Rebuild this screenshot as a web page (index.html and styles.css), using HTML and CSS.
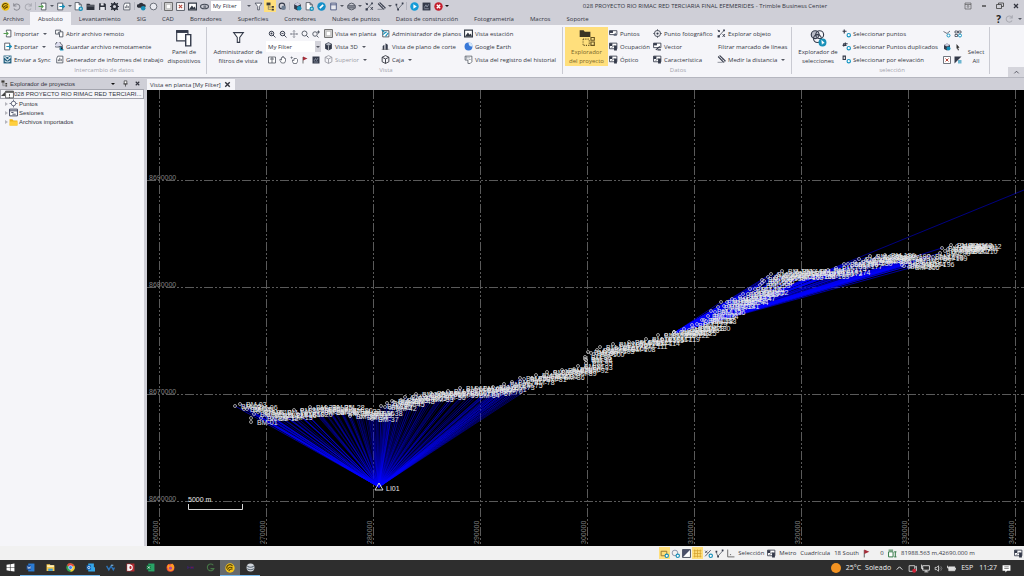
FILE: index.html
```
<!DOCTYPE html>
<html lang="es">
<head>
	<meta charset="utf-8">
	<title>Trimble Business Center</title>
	<link rel="stylesheet" href="styles.css">
</head>
<body>
	<svg class="sprite" aria-hidden="true">
		<symbol id="logo" viewBox="0 0 16 16"><circle cx="8" cy="8" r="7.5" fill="#f2c21a"/><path d="M3 9a5 5 0 0 1 9-4M4 11c2-5 5-5 8-3M6 13c1-3 3-4 6-3" fill="none" stroke="#5a4200" stroke-width="1.8"/></symbol>
		<symbol id="undo" viewBox="0 0 16 16"><path d="M3 2v5h5M3.500 6.500a5.500 5.500 0 1 1 0 5" fill="none" stroke="#8b8c95" stroke-width="1.800"/></symbol>
		<symbol id="redo" viewBox="0 0 16 16"><path d="M13 2v5H8M12.500 6.500a5.500 5.500 0 1 0 0 5" fill="none" stroke="#aaabb3" stroke-width="1.800"/></symbol>
		<symbol id="import" viewBox="0 0 16 16"><path d="M6 2h8v12H6v-3M6 5V2" fill="#fff" stroke="#454b57" stroke-width="1.500"/><path d="M1 8h8M6 5l3 3-3 3" fill="none" stroke="#549b50" stroke-width="2"/></symbol>
		<symbol id="export" viewBox="0 0 16 16"><path d="M3 2h9v12H3z" fill="#fff" stroke="#454b57" stroke-width="1.500"/><path d="M6 8h8M11 5l4 3-4 3" fill="none" stroke="#178fb8" stroke-width="2"/></symbol>
		<symbol id="newdoc" viewBox="0 0 16 16"><path d="M2 1h7l4 4v9H2zM9 1v4h4" fill="#fff" stroke="#454b57" stroke-width="1.400"/><circle cx="12" cy="12" r="4" fill="#178fb8"/><path d="M12 10v4M10 12h4" stroke="#fff"/></symbol>
		<symbol id="folder" viewBox="0 0 16 16"><path d="M1 3h5l2 2h7v9H1z" fill="#2d313b"/><path d="M2 7h12" stroke="#b9bbc4"/></symbol>
		<symbol id="save" viewBox="0 0 16 16"><path d="M2 2h10l2 2v10H2z" fill="#2d313b"/><path d="M5 2h5v4H5zM4 9h8v5H4z" fill="#e7e8ed"/></symbol>
		<symbol id="gear" viewBox="0 0 16 16"><circle cx="8" cy="8" r="4.500" fill="none" stroke="#2d313b" stroke-width="3.500"/><path d="M8 0v3M8 13v3M0 8h3M13 8h3M2 2l2 2M12 12l2 2M14 2l-2 2M4 12l-2 2" stroke="#2d313b" stroke-width="2"/></symbol>
		<symbol id="report" viewBox="0 0 16 16"><path d="M5 2h9v12H3V6z" fill="#fff" stroke="#454b57" stroke-width="1.400"/><path d="M6 11V8M8.500 11V5M11 11V7" stroke="#454b57" stroke-width="1.500"/></symbol>
		<symbol id="cloud" viewBox="0 0 16 16"><path d="M2 10a3 3 0 0 1 1-6 5 5 0 0 1 9 0 3 3 0 0 1 1 6z" fill="#2d313b"/><circle cx="11" cy="11" r="4" fill="#178fb8"/></symbol>
		<symbol id="ring" viewBox="0 0 16 16"><circle cx="8" cy="8" r="6" fill="#e9eaf0" stroke="#60646e" stroke-width="1.600"/></symbol>
		<symbol id="plan" viewBox="0 0 16 16"><path d="M1 1h14v14H1z" fill="#ddd" stroke="#555" stroke-width="1.500"/><path d="M4 4h8v8H4z" fill="#fff" stroke="#999"/></symbol>
		<symbol id="xbox" viewBox="0 0 16 16"><path d="M1 1h14v14H1z" fill="#fff" stroke="#454b57" stroke-width="1.500"/><path d="M5 5l6 6M11 5l-6 6" stroke="#b4473c" stroke-width="2"/></symbol>
		<symbol id="station" viewBox="0 0 16 16"><path d="M1 2h14v12H1z" fill="#fff" stroke="#333a45" stroke-width="2"/><path d="M2 13l5-7 3 4 2-2 2 5z" fill="#333a45"/></symbol>
		<symbol id="orbit" viewBox="0 0 16 16"><ellipse cx="8" cy="8" rx="7" ry="4" fill="none" stroke="#454b57" stroke-width="2"/><path d="M6 6h5v5H6z" fill="#777b85"/></symbol>
		<symbol id="funnel" viewBox="0 0 16 16"><path d="M2 2h12L9.500 8v6h-3V8z" fill="#fff" stroke="#343a4a" stroke-width="1.300"/></symbol>
		<symbol id="tree" viewBox="0 0 16 16"><path d="M1 1h7v5H1z" fill="#3c3a34"/><path d="M4 6v7h5M4 9h5" fill="none" stroke="#555"/><path d="M10 7h4v3h-4zM10 12h4v3h-4z" fill="#3c3a34"/></symbol>
		<symbol id="target" viewBox="0 0 16 16"><circle cx="7" cy="7" r="5" fill="none" stroke="#343a4a" stroke-width="2"/><circle cx="10" cy="10" r="4" fill="#6b7b90"/></symbol>
		<symbol id="cube" viewBox="0 0 16 16"><path d="M8 1l6 3v8l-6 3-6-3V4z" fill="#343a4a"/><path d="M2 4l6 3 6-3L8 1z" fill="#b9bec9" stroke="#343a4a"/><path d="M8 7v8" stroke="#fff"/></symbol>
		<symbol id="cubeline" viewBox="0 0 16 16"><path d="M8 1l6 3v8l-6 3-6-3V4zM2 4l6 3 6-3M8 7v8" fill="none" stroke="currentColor" stroke-width="1.600"/></symbol>
		<symbol id="cubeblue" viewBox="0 0 16 16"><path d="M8 1l6 3v8l-6 3-6-3V4z" fill="#343a4a"/><path d="M2 4l6 3 6-3-6-3z" fill="#ccd"/><circle cx="11" cy="11" r="4" fill="#178fb8"/></symbol>
		<symbol id="pen" viewBox="0 0 16 16"><circle cx="8" cy="8" r="7.500" fill="#178fc8"/><path d="M5 11l6-6" stroke="#fff" stroke-width="3"/></symbol>
		<symbol id="sheet" viewBox="0 0 16 16"><path d="M3 2h10v12H3zM3 5h10" fill="#e9eaf0" stroke="#4b5780" stroke-width="1.600"/></symbol>
		<symbol id="print" viewBox="0 0 16 16"><circle cx="8" cy="8" r="6" fill="none" stroke="#454b57" stroke-width="1.500"/><path d="M1 6h14v5H1z" fill="#7e828d" stroke="#454b57"/></symbol>
		<symbol id="nodes" viewBox="0 0 16 16"><path d="M3 13L12 3" stroke="#454b57" stroke-width="1.400"/><path d="M1 2l4 3M10 9l4 5M14 9l-4 5" stroke="#343a4a" stroke-width="1.600"/><path d="M1 11h4v4H1zM11 1h3v3h-3zM2 2h3v3H2z" fill="#343a4a"/></symbol>
		<symbol id="snap" viewBox="0 0 16 16"><path d="M2 13L12 2M2 3l4 4M6 3L2 7" stroke="#454b57" stroke-width="1.500"/><circle cx="12" cy="12" r="3" fill="#fff" stroke="#178fb8" stroke-width="2"/></symbol>
		<symbol id="measure" viewBox="0 0 16 16"><path d="M2 3l10 10M5 1l10 10" stroke="#343a4a" stroke-width="2"/><path d="M2 3l3-2M6 6l3-2M9 9l3-2M12 13l3-2M1 13h9" stroke="#454b57"/></symbol>
		<symbol id="line" viewBox="0 0 16 16"><path d="M2 5l3 8 9-10" fill="none" stroke="#555c68" stroke-width="1.400"/><path d="M1 3h3v3H1zM4 12h3v3H4zM12 1h3v3h-3z" fill="#343a4a"/></symbol>
		<symbol id="play" viewBox="0 0 16 16"><circle cx="8" cy="8" r="7.500" fill="#159bd7"/><path d="M6 4l6 4-6 4z" fill="#fff"/></symbol>
		<symbol id="panel" viewBox="0 0 16 16"><path d="M1 1h14v14H1z" fill="#343a4a"/><path d="M4 10l3-5 2 4 3-5M4 12h8" fill="none" stroke="#9299a9" stroke-width="1.500"/></symbol>
		<symbol id="stop" viewBox="0 0 16 16"><circle cx="8" cy="8" r="7.500" fill="#c41f2d"/><path d="M5 5l6 6M11 5l-6 6" stroke="#fff" stroke-width="2.500"/></symbol>
		<symbol id="max" viewBox="0 0 16 16"><path d="M2 2h12v12H2zM2 5h12M8 12V7M6 9l2-2 2 2" fill="none" stroke="#555" stroke-width="1.300"/></symbol>
		<symbol id="restore" viewBox="0 0 16 16"><path d="M5 5V2h10v7h-4M1 5h10v8H1z" fill="none" stroke="#444" stroke-width="1.700"/></symbol>
		<symbol id="close" viewBox="0 0 16 16"><path d="M4 4l8 8M12 4l-8 8" stroke="currentColor" stroke-width="2.500"/></symbol>
		<symbol id="min" viewBox="0 0 16 16"><path d="M4 8h8" stroke="#333" stroke-width="2.500"/></symbol>
		<symbol id="remote" viewBox="0 0 16 16"><path d="M8 9H1V2h9v3M8 5h6v9H8z" fill="#fff" stroke="#454b57" stroke-width="1.500"/><path d="M5 5h4v4H5z" fill="#787d88"/></symbol>
		<symbol id="remotesave" viewBox="0 0 16 16"><path d="M7 9H2a3 3 0 0 1 0-6 4 4 0 0 1 8 0l3 2v3H7z" fill="#dde" stroke="#454b57" stroke-width="1.300"/><path d="M8 8h6v6H8z" fill="#3f5267"/><path d="M10 9v5h5" stroke="#1998c2" stroke-width="2"/></symbol>
		<symbol id="sync" viewBox="0 0 16 16"><path d="M1 1h14v14H1z" fill="#1d5c7c"/><path d="M3 5q5-5 10 1M3 10q5 5 10 0M2 3l6 6 6-6" fill="none" stroke="#dfeaf0" stroke-width="1.800"/></symbol>
		<symbol id="devices" viewBox="0 0 32 32"><path d="M3 3h20v7h-4v11H3z" fill="#fff" stroke="#343a4a" stroke-width="2"/><path d="M2 2h21v5H2z" fill="#343a4a"/><path d="M19 10h9v20h-9z" fill="#fff" stroke="#343a4a" stroke-width="2.500"/></symbol>
		<symbol id="bigfolder" viewBox="0 0 32 32"><path d="M3 2h7l2 3h10v9H3z" fill="#3b3523"/><path d="M9 18v11h11M9 18h11M20 20v9" fill="none" stroke="#665320" stroke-width="2" stroke-dasharray="2 2"/><path d="M23 15h6v5h-6zM23 23h6v6h-6z" fill="#ffe58c" stroke="#665320" stroke-width="2"/></symbol>
		<symbol id="selset" viewBox="0 0 32 32"><circle cx="11" cy="10" r="7" fill="#b9bbc6" stroke="#343a4a" stroke-width="2"/><circle cx="19" cy="10" r="7" fill="none" stroke="#343a4a" stroke-width="2"/><circle cx="15" cy="17" r="7" fill="none" stroke="#343a4a" stroke-width="2"/><circle cx="24" cy="24" r="7" fill="#178fb8"/><path d="M22 19l6 6-4 1-1 3z" fill="#fff"/></symbol>
		<symbol id="zoomin" viewBox="0 0 16 16"><circle cx="7" cy="7" r="4.500" fill="none" stroke="#343a4a" stroke-width="2"/><path d="M10 10l5 5M5 7h4M7 5v4" stroke="#343a4a" stroke-width="1.700"/></symbol>
		<symbol id="zoomout" viewBox="0 0 16 16"><circle cx="7" cy="7" r="4.500" fill="none" stroke="#343a4a" stroke-width="2"/><path d="M10 10l5 5M5 7h4" stroke="#343a4a" stroke-width="1.700"/></symbol>
		<symbol id="pan" viewBox="0 0 16 16"><path d="M8 1v14M1 8h14M3 6L1 8l2 2M13 6l2 2-2 2M6 3l2-2 2 2M6 13l2 2 2-2" fill="none" stroke="#5a606c" stroke-width="1.200"/></symbol>
		<symbol id="zoom" viewBox="0 0 16 16"><circle cx="7" cy="7" r="5" fill="none" stroke="#454b57" stroke-width="1.700"/><path d="M11 11l4 4" stroke="#454b57" stroke-width="2"/></symbol>
		<symbol id="zoomsel" viewBox="0 0 16 16"><circle cx="6" cy="8" r="4.500" fill="none" stroke="#454b57" stroke-width="1.700"/><path d="M10 12l3 3M13 1v6M10 4h6" stroke="#454b57" stroke-width="1.700"/></symbol>
		<symbol id="split" viewBox="0 0 16 16"><path d="M1 2h14v12H1zM8 2v12M4 6h8" fill="#fff" stroke="#454b57" stroke-width="1.500"/></symbol>
		<symbol id="hand" viewBox="0 0 16 16"><path d="M5 14L2 9V6l3 2V3h2V1h2v2h2v2h2v5l-2 4z" fill="#fff" stroke="#454b57" stroke-width="1.400"/></symbol>
		<symbol id="handzoom" viewBox="0 0 16 16"><path d="M7 15L5 11V8l3 1V5h5l2 2v4l-2 4z" fill="#fff" stroke="#454b57" stroke-width="1.400"/><path d="M3 1v5M1 3h5" stroke="#454b57"/></symbol>
		<symbol id="flag" viewBox="0 0 16 16"><path d="M4 2v13" stroke="#444" stroke-width="1.500"/><path d="M4 1l9 4-9 4z" fill="#a52c38"/></symbol>
		<symbol id="planes" viewBox="0 0 16 16"><path d="M3 3h11v11H3z" fill="#fff" stroke="#454b57" stroke-width="1.500"/><path d="M1 1l5 5M3 10l7-5M8 13l5-6" stroke="#178fb8" stroke-width="2"/></symbol>
		<symbol id="cut" viewBox="0 0 16 16"><path d="M3 14V7l3-2v9zM8 14V2l4 3v9z" fill="#343a4a"/><path d="M1 13h14" stroke="#777"/></symbol>
		<symbol id="earth" viewBox="0 0 16 16"><circle cx="8" cy="8" r="7" fill="#3979d8"/><path d="M8 1a7 7 0 0 1 7 7q-7 1-7-7z" fill="#d5e9fb"/></symbol>
		<symbol id="history" viewBox="0 0 16 16"><path d="M2 2h12v10l-3 3H7V9H2z" fill="#fff" stroke="#454b57" stroke-width="1.300"/><path d="M4 5h7M8 8h4M4 2v6" stroke="#6a7384"/></symbol>
		<symbol id="points" viewBox="0 0 16 16"><path d="M1 3h13v7H1z" fill="#fff" stroke="#343a4a" stroke-width="1.500"/><path d="M1 3h6v4H1z" fill="#343a4a"/><path d="M8 12l3-6 3 6z" fill="#596174"/></symbol>
		<symbol id="occupy" viewBox="0 0 16 16"><path d="M1 2h13v10H1z" fill="#fff" stroke="#343a4a" stroke-width="1.500"/><path d="M1 2h5v5H1zM9 6h5v9H9z" fill="#343a4a"/><path d="M5 10l4-4" stroke="#343a4a" stroke-width="1.600"/></symbol>
		<symbol id="photo" viewBox="0 0 16 16"><circle cx="8" cy="8" r="5.500" fill="none" stroke="#343a4a" stroke-width="1.500"/><circle cx="8" cy="8" r="2" fill="#343a4a"/><path d="M8 0v4M0 8h4M12 8h4M8 12v4" stroke="#343a4a"/></symbol>
		<symbol id="vector" viewBox="0 0 16 16"><path d="M1 2h13v8H1z" fill="#fff" stroke="#343a4a" stroke-width="1.500"/><path d="M1 2h6v4H1z" fill="#343a4a"/><path d="M5 14l7-6M8 14h6" stroke="#343a4a" stroke-width="1.800"/></symbol>
		<symbol id="selpt" viewBox="0 0 16 16"><path d="M4 1v7M1 4h7" stroke="#343a4a" stroke-width="2"/><circle cx="12" cy="11" r="3" fill="#fff" stroke="#1595c3" stroke-width="2"/></symbol>
		<symbol id="seldup" viewBox="0 0 16 16"><path d="M3 2v6M1 6h7M6 1v6M4 3h6" stroke="#343a4a" stroke-width="2"/><circle cx="12" cy="11" r="3" fill="#fff" stroke="#1595c3" stroke-width="2"/></symbol>
		<symbol id="selelev" viewBox="0 0 16 16"><path d="M2 2h4v6H2z" fill="#fff" stroke="#343a4a" stroke-width="2"/><circle cx="12" cy="11" r="3" fill="#fff" stroke="#1595c3" stroke-width="2"/></symbol>
		<symbol id="selline" viewBox="0 0 16 16"><path d="M1 3l7 4 6-5" fill="none" stroke="#343a4a" stroke-width="1.400"/><circle cx="11" cy="11" r="3" fill="#fff" stroke="#1595c3" stroke-width="2"/></symbol>
		<symbol id="selmulti" viewBox="0 0 16 16"><path d="M2 2h5v4H2zM9 2h5v4H9zM2 9h5v4H2z" fill="#fff" stroke="#343a4a" stroke-width="1.500"/><circle cx="12" cy="11" r="3" fill="#fff" stroke="#1595c3" stroke-width="2"/></symbol>
		<symbol id="cursor" viewBox="0 0 16 16"><path d="M5 2l6 7-3 1 2 4-2 1-2-5-1 2z" fill="#333"/></symbol>
		<symbol id="invert" viewBox="0 0 16 16"><path d="M1 1h14v14H1z" fill="#fff" stroke="#343a4a" stroke-width="1.500"/><path d="M1 1h14L1 15z" fill="#4a5068"/></symbol>
		<symbol id="invertblue" viewBox="0 0 16 16"><path d="M1 1h14L1 15z" fill="#343a4a"/><path d="M8 8h7v7H8z" fill="#6cb5d0"/></symbol>
		<symbol id="point" viewBox="0 0 16 16"><circle cx="8" cy="8" r="4" fill="#fff" stroke="#555a73" stroke-width="1.600"/><path d="M8 1v3M8 12v3M1 8h3M12 8h3" stroke="#555a73" stroke-width="1.400"/></symbol>
		<symbol id="project" viewBox="0 0 16 16"><path d="M1 2h14v12H1z" fill="#fff" stroke="#444" stroke-width="1.400"/><path d="M1 2h14v3H1z" fill="#555"/><path d="M8 7v4M8 12v2" stroke="#444" stroke-width="1.600"/></symbol>
		<symbol id="session" viewBox="0 0 16 16"><path d="M1 2h14v12H1zM1 5h14" fill="#fff" stroke="#343a55" stroke-width="1.600"/><path d="M4 8h4M6 11h6" stroke="#343a55" stroke-width="1.500"/></symbol>
		<symbol id="yfolder" viewBox="0 0 16 16"><path d="M1 4h5l2 2h7v9H1z" fill="#eeb41a"/><path d="M2 8h13v7H1z" fill="#ffcf3e"/></symbol>
		<symbol id="pin" viewBox="0 0 16 16"><path d="M5 2h6v7H5zM3 9h10M8 9v6" fill="#fff" stroke="#333" stroke-width="1.600"/></symbol>
		<symbol id="chev" viewBox="0 0 16 16"><path d="M3 10l5-5 5 5" fill="none" stroke="currentColor" stroke-width="1.700"/></symbol>
		<symbol id="rectsel" viewBox="0 0 16 16"><path d="M2 4h10v8H2z" fill="none" stroke="#8b6c2c" stroke-width="1.500"/><circle cx="12" cy="12" r="3" fill="#fff" stroke="#178fb8" stroke-width="2"/></symbol>
		<symbol id="circsel" viewBox="0 0 16 16"><circle cx="7" cy="7" r="5" fill="none" stroke="#7f88a0" stroke-width="1.500"/><circle cx="12" cy="12" r="3" fill="#fff" stroke="#178fb8" stroke-width="2"/></symbol>
		<symbol id="grid" viewBox="0 0 16 16"><path d="M1 3h14M1 8h14M1 13h14M3 1v14M8 1v14M13 1v14" stroke="#d6a431" stroke-width="1.400"/></symbol>
		<symbol id="angle" viewBox="0 0 16 16"><path d="M3 1v13h12M7 10h2" fill="none" stroke="#555" stroke-width="1.500"/></symbol>
		<symbol id="extent" viewBox="0 0 16 16"><path d="M1 5h8v9H1zM1 2h8M13 5v9M11 5h4M11 14h4" fill="#fff" stroke="#2c7540" stroke-width="1.700"/></symbol>
		<symbol id="win" viewBox="0 0 16 16"><path d="M1 3l6-1v5.500H1zM8 2l7-1v6.500H8zM1 8.500h6V14l-6-1zM8 8.500h7V15l-7-1z" fill="#fff"/></symbol>
		<symbol id="word" viewBox="0 0 16 16"><path d="M4 1h11v14H4z" fill="#2b7cd3"/><path d="M1 4h8v8H1z" fill="#184f9f"/><path d="M3 6l1 4 1.500-3L7 10l1-4" fill="none" stroke="#fff"/></symbol>
		<symbol id="files" viewBox="0 0 16 16"><path d="M1 2h6l1 2h7v10H1z" fill="#f5c84c"/><path d="M2 4h12v3H2z" fill="#fff1bf"/><path d="M4 10h8v4H4z" fill="#3b9bd5"/></symbol>
		<symbol id="chrome" viewBox="0 0 16 16"><circle cx="8" cy="8" r="7.500" fill="#35a553"/><path d="M8 8L1.500 4A7.500 7.500 0 0 1 15 5z" fill="#e4493a"/><path d="M8 8l7-3a7.500 7.500 0 0 1-7 10.500z" fill="#f8c82e"/><circle cx="8" cy="8" r="3.500" fill="#4285f4" stroke="#fff"/></symbol>
		<symbol id="outlook" viewBox="0 0 16 16"><path d="M4 1h10v6l2 1v7H4z" fill="#35a6e8"/><path d="M1 4h8v8H1z" fill="#0f62b8"/><circle cx="5" cy="8" r="2" fill="none" stroke="#fff" stroke-width="1.300"/></symbol>
		<symbol id="vm" viewBox="0 0 16 16"><path d="M1 5l4 7 4-7 4 7 2-4" fill="none" stroke="#2e74b8" stroke-width="2.500"/><path d="M9 4h4" stroke="#83b9df" stroke-width="2"/></symbol>
		<symbol id="pdf" viewBox="0 0 16 16"><path d="M1 1h14v14H1z" fill="#b52c32"/><path d="M2 2h6v12H2z" fill="#eee"/><ellipse cx="8" cy="8" rx="3" ry="4" fill="#b52c32" stroke="#fff" stroke-width="2"/></symbol>
		<symbol id="excel" viewBox="0 0 16 16"><path d="M4 1h11v14H4z" fill="#29a366"/><path d="M1 4h8v8H1z" fill="#107c41"/><path d="M3 6l4 4M7 6l-4 4" stroke="#fff" stroke-width="1.400"/></symbol>
		<symbol id="firefox" viewBox="0 0 16 16"><circle cx="8" cy="8.500" r="7" fill="#f04e3b"/><path d="M2 7l2-5 3 3 4-4q5 4 3 10-4 5-9 2z" fill="#ff9c22"/><circle cx="8" cy="9" r="3" fill="#b04a9a"/></symbol>
		<symbol id="darkapp" viewBox="0 0 16 16"><path d="M2 5l5 3-5 3zM7 6h7v4H7z" fill="#3a2463"/><path d="M9 7h3v2H9z" fill="#7a1b3b"/></symbol>
		<symbol id="gapp" viewBox="0 0 16 16"><path d="M13 4a6 6 0 1 0 1 6H8" fill="none" stroke="#477747" stroke-width="2"/></symbol>
		<symbol id="globe" viewBox="0 0 16 16"><circle cx="8" cy="8" r="7" fill="#d2d7dd"/><path d="M2 5q6 5 12 0M2 10q6 4 12 0" fill="none" stroke="#5d6a76" stroke-width="2"/></symbol>
		<symbol id="meet" viewBox="0 0 16 16"><path d="M2 3h10v10H2zM12 6l3-2v8l-3-2" fill="none" stroke="#ddd" stroke-width="1.500"/><circle cx="11" cy="12" r="3.500" fill="#cf2438"/></symbol>
		<symbol id="net" viewBox="0 0 16 16"><path d="M3 3h12v8H3zM6 14h7M9 11v3M1 1v7h3" fill="none" stroke="#eee" stroke-width="1.500"/></symbol>
		<symbol id="sound" viewBox="0 0 16 16"><path d="M2 6h3l3-3v10l-3-3H2z" fill="none" stroke="#eee" stroke-width="1.300"/><path d="M10 6q2 2 0 4M12 4q4 4 0 8" fill="none" stroke="#aaa"/></symbol>
		<symbol id="battery" viewBox="0 0 16 16"><path d="M3 5h11v7H3z" fill="#ddd" stroke="#eee"/><path d="M15 7v3M1 3v4h4" fill="none" stroke="#eee" stroke-width="1.500"/></symbol>
		<symbol id="note" viewBox="0 0 16 16"><path d="M1 2h14v10H9l-3 3v-3H1z" fill="#fff"/><path d="M4 5h8M4 8h8" stroke="#333"/></symbol>
	</svg>

	<header class="titlebar">
		<div class="quick">
			<button aria-label="Inicio"><svg><use href="#logo"/></svg></button>
			<button aria-label="Deshacer"><svg><use href="#undo"/></svg></button>
			<button aria-label="Rehacer"><svg><use href="#redo"/></svg></button>
			<i class="bar"></i>
			<button aria-label="Importar"><svg><use href="#import"/></svg></button><i class="caret"></i>
			<button aria-label="Exportar"><svg><use href="#export"/></svg></button><i class="caret"></i>
			<button aria-label="Nuevo"><svg><use href="#newdoc"/></svg></button>
			<button aria-label="Abrir"><svg><use href="#folder"/></svg></button>
			<button aria-label="Guardar"><svg><use href="#save"/></svg></button>
			<button aria-label="Configuración"><svg><use href="#gear"/></svg></button>
			<button aria-label="Informe"><svg><use href="#report"/></svg></button>
			<i class="bar"></i>
			<button aria-label="Nube"><svg><use href="#cloud"/></svg></button>
			<button aria-label="Estado"><svg><use href="#ring"/></svg></button>
			<i class="bar"></i>
			<button aria-label="Planta"><svg><use href="#plan"/></svg></button>
			<button aria-label="Borrar"><svg><use href="#xbox"/></svg></button>
			<button aria-label="Estación"><svg><use href="#station"/></svg></button>
			<button aria-label="Órbita"><svg><use href="#orbit"/></svg></button>
			<select class="quick-filter" aria-label="Filtro rápido"><option>My Filter</option></select>
			<i class="caret"></i>
			<button aria-label="Filtros"><svg><use href="#funnel"/></svg></button>
			<button class="on" aria-label="Explorador"><svg><use href="#tree"/></svg></button>
			<button aria-label="Selecciones"><svg><use href="#target"/></svg></button>
			<i class="bar"></i>
			<button aria-label="Bloque"><svg><use href="#cubeblue"/></svg></button>
			<button aria-label="Agregar"><svg><use href="#newdoc"/></svg></button>
			<button aria-label="Editar"><svg><use href="#pen"/></svg></button>
			<button aria-label="Hoja"><svg><use href="#sheet"/></svg></button><i class="caret"></i>
			<button aria-label="Imprimir"><svg><use href="#print"/></svg></button><i class="caret"></i>
			<button aria-label="Explorar"><svg><use href="#nodes"/></svg></button>
			<button aria-label="Medir"><svg><use href="#measure"/></svg></button><i class="caret"></i>
			<button aria-label="Línea"><svg><use href="#line"/></svg></button>
			<i class="bar"></i>
			<button aria-label="Ejecutar"><svg><use href="#play"/></svg></button>
			<button aria-label="Panel"><svg><use href="#panel"/></svg></button>
			<button aria-label="Detener"><svg><use href="#stop"/></svg></button>
			<i class="caret dark"></i>
		</div>
		<div class="title">028 PROYECTO RIO RIMAC RED TERCIARIA FINAL EFEMERIDES - Trimble Business Center</div>
		<div class="winbtns">
			<button aria-label="Cinta"><svg><use href="#max"/></svg></button>
			<button aria-label="Minimizar"><svg><use href="#min"/></svg></button>
			<button aria-label="Restaurar"><svg><use href="#restore"/></svg></button>
			<button aria-label="Cerrar"><svg><use href="#close"/></svg></button>
		</div>
	</header>

	<nav class="tabs">
		<button class="file">Archivo</button>
		<button class="active">Absoluto</button>
		<button>Levantamiento</button>
		<button>SIG</button>
		<button>CAD</button>
		<button>Borradores</button>
		<button>Superficies</button>
		<button>Corredores</button>
		<button>Nubes de puntos</button>
		<button>Datos de construcción</button>
		<button>Fotogrametría</button>
		<button>Macros</button>
		<button>Soporte</button>
		<div class="help">
			<button class="question">?</button>
			<button aria-label="Estado de licencia"><svg><use href="#redo"/></svg></button>
			<i class="caret"></i>
		</div>
	</nav>

	<section class="ribbon">
		<div class="group share">
			<div class="cols">
				<div class="col">
					<button><svg><use href="#import"/></svg>Importar<i class="caret"></i></button>
					<button><svg><use href="#export"/></svg>Exportar<i class="caret"></i></button>
					<button><svg><use href="#sync"/></svg>Enviar a Sync</button>
				</div>
				<div class="col">
					<button><svg><use href="#remote"/></svg>Abrir archivo remoto</button>
					<button><svg><use href="#remotesave"/></svg>Guardar archivo remotamente</button>
					<button><svg><use href="#report"/></svg>Generador de informes del trabajo</button>
				</div>
				<button class="big"><svg><use href="#devices"/></svg>Panel de<br>dispositivos</button>
			</div>
			<div class="caption">Intercambio de datos</div>
		</div>
		<div class="group view">
			<div class="cols">
				<button class="big thin"><svg><use href="#funnel"/></svg>Administrador de<br>filtros de vista</button>
				<div class="col filter">
					<div class="icons">
						<button aria-label="Acercar"><svg><use href="#zoomin"/></svg></button>
						<button aria-label="Alejar"><svg><use href="#zoomout"/></svg></button>
						<button aria-label="Mover"><svg><use href="#pan"/></svg></button>
						<button aria-label="Zoom"><svg><use href="#zoom"/></svg></button>
						<button aria-label="Zoom a selección"><svg><use href="#zoomsel"/></svg></button>
					</div>
					<div class="combo">
						<select aria-label="Filtro de vista"><option>My Filter</option></select>
						<i class="caret"></i>
					</div>
					<div class="icons">
						<button aria-label="Dividir"><svg><use href="#split"/></svg></button>
						<button aria-label="Mano"><svg><use href="#hand"/></svg></button>
						<button aria-label="Girar"><svg><use href="#handzoom"/></svg></button>
						<button aria-label="Bandera"><svg><use href="#flag"/></svg></button>
						<button aria-label="Fondo"><svg><use href="#panel"/></svg></button>
					</div>
				</div>
				<div class="col">
					<button><svg><use href="#plan"/></svg>Vista en planta</button>
					<button><svg><use href="#cube"/></svg>Vista 3D<i class="caret"></i></button>
					<button class="off"><svg><use href="#cubeline"/></svg>Superior<i class="caret"></i></button>
				</div>
				<div class="col">
					<button><svg><use href="#planes"/></svg>Administrador de planos</button>
					<button><svg><use href="#cut"/></svg>Vista de plano de corte</button>
					<button><svg><use href="#cubeline"/></svg>Caja<i class="caret"></i></button>
				</div>
				<div class="col">
					<button><svg><use href="#station"/></svg>Vista estación</button>
					<button><svg><use href="#earth"/></svg>Google Earth</button>
					<button><svg><use href="#history"/></svg>Vista del registro del historial</button>
				</div>
			</div>
			<div class="caption">Vista</div>
		</div>
		<div class="group data">
			<div class="cols">
				<button class="big on"><svg><use href="#bigfolder"/></svg>Explorador<br>del proyecto</button>
				<div class="col">
					<button><svg><use href="#points"/></svg>Puntos</button>
					<button><svg><use href="#occupy"/></svg>Ocupación</button>
					<button><svg><use href="#occupy"/></svg>Óptico</button>
				</div>
				<div class="col">
					<button><svg><use href="#photo"/></svg>Punto fotográfico</button>
					<button><svg><use href="#vector"/></svg>Vector</button>
					<button><svg><use href="#occupy"/></svg>Característica</button>
				</div>
				<div class="col">
					<button><svg><use href="#nodes"/></svg>Explorar objeto</button>
					<button class="plain">Filtrar marcado de líneas</button>
					<button><svg><use href="#measure"/></svg>Medir la distancia<i class="caret"></i></button>
				</div>
			</div>
			<div class="caption">Datos</div>
		</div>
		<div class="group select">
			<div class="cols">
				<button class="big"><svg><use href="#selset"/></svg>Explorador de<br>selecciones</button>
				<div class="col">
					<button><svg><use href="#selpt"/></svg>Seleccionar puntos</button>
					<button><svg><use href="#seldup"/></svg>Seleccionar Puntos duplicados</button>
					<button><svg><use href="#selelev"/></svg>Seleccionar por elevación</button>
				</div>
				<div class="col">
					<div class="icons">
						<button aria-label="Seleccionar línea"><svg><use href="#selline"/></svg></button>
						<button aria-label="Selección múltiple"><svg><use href="#selmulti"/></svg></button>
					</div>
					<div class="icons">
						<button aria-label="Seleccionar bloque"><svg><use href="#cubeblue"/></svg></button>
						<button aria-label="Cursor"><svg><use href="#cursor"/></svg></button>
					</div>
					<div class="icons">
						<button aria-label="Anular selección"><svg><use href="#xbox"/></svg></button>
						<button aria-label="Invertir selección"><svg><use href="#invertblue"/></svg></button>
					</div>
				</div>
				<button class="big low">Select<br>All</button>
			</div>
			<div class="caption">selección</div>
		</div>
		<button class="collapse" aria-label="Contraer la cinta"><svg><use href="#chev"/></svg></button>
	</section>

	<main class="work">
		<aside class="explorer">
			<div class="panelhead">
				<svg><use href="#tree"/></svg>
				<span>Explorador de proyectos</span>
				<button aria-label="Opciones"><i class="caret dark"></i></button>
				<button aria-label="Fijar"><svg><use href="#pin"/></svg></button>
				<button aria-label="Cerrar panel"><svg><use href="#close"/></svg></button>
			</div>
			<ul class="tree">
				<li class="root"><i class="open"></i><svg><use href="#project"/></svg><span>028 PROYECTO RIO RIMAC RED TERCIARI...</span></li>
				<li><i class="closed"></i><svg><use href="#point"/></svg><span>Puntos</span></li>
				<li><i class="closed"></i><svg><use href="#session"/></svg><span>Sesiones</span></li>
				<li><i class="closed"></i><svg><use href="#yfolder"/></svg><span>Archivos importados</span></li>
			</ul>
		</aside>
		<section class="doc">
			<div class="doctabs">
				<div class="doctab">Vista en planta [My Filter]<button aria-label="Cerrar vista"><svg><use href="#close"/></svg></button></div>
			</div>
			<svg class="map" id="map" viewBox="147 90 877 456" preserveAspectRatio="xMidYMid slice"></svg>
		</section>
	</main>

	<footer class="status">
		<button class="on" aria-label="Selección rectangular"><svg><use href="#rectsel"/></svg></button>
		<button aria-label="Selección circular"><svg><use href="#circsel"/></svg></button>
		<button aria-label="Invertir fondo"><svg><use href="#invert"/></svg></button>
		<button class="on" aria-label="Cuadrícula visible"><svg><use href="#grid"/></svg></button>
		<button aria-label="Ajuste"><svg><use href="#snap"/></svg></button>
		<button aria-label="Ajuste a línea"><svg><use href="#line"/></svg></button>
		<button aria-label="Ángulo"><svg><use href="#angle"/></svg></button>
		<button class="word">Selección</button>
		<button aria-label="Unidades"><svg><use href="#occupy"/></svg></button>
		<button class="word">Metro</button>
		<button class="word">Cuadrícula</button>
		<button class="word">18 South</button>
		<button aria-label="Banderas"><svg><use href="#flag"/></svg></button>
		<span class="count">0</span>
		<svg><use href="#extent"/></svg>
		<span class="coords">81988.563 m,42690.000 m</span>
		<button aria-label="Opciones de estado"><svg><use href="#occupy"/></svg></button>
	</footer>

	<footer class="taskbar">
		<button aria-label="Inicio de Windows"><svg><use href="#win"/></svg></button>
		<button class="run" aria-label="Word"><svg><use href="#word"/></svg></button>
		<button class="run" aria-label="Archivos"><svg><use href="#files"/></svg></button>
		<button class="run" aria-label="Chrome"><svg><use href="#chrome"/></svg></button>
		<button class="run" aria-label="Outlook"><svg><use href="#outlook"/></svg></button>
		<button aria-label="Visor"><svg><use href="#vm"/></svg></button>
		<button aria-label="PDF"><svg><use href="#pdf"/></svg></button>
		<button aria-label="Excel"><svg><use href="#excel"/></svg></button>
		<button aria-label="Firefox"><svg><use href="#firefox"/></svg></button>
		<button aria-label="Aplicación"><svg><use href="#darkapp"/></svg></button>
		<button aria-label="Topografía"><svg><use href="#gapp"/></svg></button>
		<button class="run current" aria-label="Trimble"><svg><use href="#logo"/></svg></button>
		<button class="run" aria-label="Google Earth"><svg><use href="#globe"/></svg></button>
		<div class="tray">
			<i class="sun"></i>
			<span class="temp">25°C</span>
			<span class="sky">Soleado</span>
			<svg><use href="#chev"/></svg>
			<svg><use href="#meet"/></svg>
			<svg><use href="#net"/></svg>
			<svg><use href="#sound"/></svg>
			<svg><use href="#battery"/></svg>
			<span class="lang">ESP</span>
			<span class="clock">11:27</span>
			<svg><use href="#note"/></svg>
		</div>
	</footer>
	<script src="map.js"></script>
</body>
</html>
```
FILE: styles.css
```
*{
	box-sizing:border-box;
}
body{
	margin:0;
	height:100vh;
	padding-bottom:2px;
	display:flex;
	flex-direction:column;
	overflow:hidden;
	background-color:#ffffff;
	color:#33353f;
	font-family:"Open Sans","Noto Sans",sans-serif;
	font-size:6px;
	line-height:8px;
}
button,select{
	margin:0;
	padding:0;
	border:0;
	background:none;
	color:inherit;
	font:inherit;
	white-space:nowrap;
}
button{
	display:flex;
	align-items:center;
	justify-content:center;
}
svg{
	flex:none;
	width:9px;
	height:9px;
}
.sprite{
	display:none;
}
.caret{
	flex:none;
	margin:0 2px;
	border-left:2px solid transparent;
	border-right:2px solid transparent;
	border-top:2px solid #555862;
}
.caret.dark{
	border-top-color:#111111;
}
.on{
	background-color:#ffdf7c;
}

/* title bar */
.titlebar{
	display:flex;
	align-items:center;
	height:12px;
	background-color:#cfcfd7;
}
.quick{
	display:flex;
	align-items:center;
	width:450px;
}
.quick button{
	width:12px;
	height:12px;
	flex:none;
}
.quick button:first-child{
	width:10px;
}
.bar{
	width:1px;
	height:8px;
	margin:0 1px;
	background-color:#b3b4be;
}
.quick .caret{
	margin:0 1px;
}
.quick-filter{
	width:34px;
	height:10px;
	margin:0 5px 0 0;
	padding-left:2px;
	background-color:#ffffff;
	appearance:none;
}
.title{
	flex:1;
	text-align:center;
	white-space:nowrap;
}
.winbtns{
	display:flex;
}
.winbtns button{
	width:16px;
	height:12px;
}
.winbtns svg{
	width:8px;
	height:8px;
}

/* ribbon tabs */
.tabs{
	display:flex;
	height:13px;
	background-color:#cfcfd7;
}
.tabs button{
	padding:0 8px;
}
.tabs .file{
	padding:0 6px 0 3px;
}
.tabs .active{
	background-color:#f5f5f9;
}
.help{
	display:flex;
	align-items:center;
	margin-left:auto;
}
.help button{
	padding:0 2px;
}
.help .question{
	font-size:10px;
	font-weight:bold;
	color:#222222;
}

/* ribbon */
.ribbon{
	display:flex;
	height:53px;
	padding-top:2px;
	background-color:#f5f5f9;
	border-bottom:1px solid #b5b6bf;
}
.group{
	display:flex;
	flex-direction:column;
	flex:none;
	height:47px;
	border-right:1px solid #c9cad2;
}
.cols{
	display:grid;
	height:39px;
}
.share{
	width:207px;
	padding-left:2px;
}
.share .cols{
	grid-template-columns:52px 109px 42px;
}
.view{
	width:356px;
	padding-left:3px;
}
.view .cols{
	grid-template-columns:56px 57px 57px 83px 98px;
}
.data{
	width:229px;
	padding-left:2px;
}
.data .cols{
	grid-template-columns:43px 44px 64px 75px;
}
.select{
	width:198px;
	padding-left:3px;
}
.select .cols{
	grid-template-columns:46px 100px 24px 22px;
}
.col{
	display:grid;
	grid-template-rows:repeat(3,13px);
}
.col > button{
	justify-content:flex-start;
	gap:2px;
	padding-left:1px;
}
.col .caret{
	margin:0 2px;
}
.col .plain{
	padding-left:2px;
}
.off{
	color:#9c9da6;
}
.icons{
	display:flex;
	align-items:center;
}
.icons button{
	width:11px;
}
.icons svg{
	width:8px;
	height:8px;
}
.combo{
	display:flex;
	align-items:center;
	height:11px;
	margin:1px 2px 1px 0;
	background-color:#d3d3da;
}
.combo .caret{
	margin:0 1px;
}
.combo select{
	flex:1;
	height:11px;
	padding-left:2px;
	background-color:#ffffff;
	appearance:none;
}
.big{
	flex-direction:column;
	justify-content:flex-start;
	padding-top:2px;
	line-height:9px;
}
.big svg{
	width:18px;
	height:18px;
	margin-bottom:1px;
}
.thin svg{
	width:13px;
	height:13px;
	margin:2px 0 4px;
}
.big.on{
	color:#796529;
}
.low{
	padding-top:21px;
}
.caption{
	text-align:center;
	color:#a2a3ac;
}
.collapse{
	width:16px;
	height:10px;
	margin:auto 0 0 auto;
	background-color:#d5d5dc;
}
.collapse svg{
	width:7px;
	height:7px;
}

/* project explorer */
.work{
	flex:1;
	min-height:0;
	display:flex;
	background-color:#cfcfd7;
}
.explorer{
	width:144px;
	margin-right:3px;
	display:flex;
	flex-direction:column;
	background-color:#f5f5f9;
	font-family:"Liberation Sans",sans-serif;
}
.panelhead{
	display:flex;
	align-items:center;
	height:11px;
	padding:0 2px 0 1px;
	gap:2px;
	background-color:#cfcfd7;
}
.panelhead span{
	flex:1;
}
.panelhead svg{
	width:7px;
	height:7px;
}
.panelhead button{
	width:10px;
}
.tree{
	margin:0;
	padding:0;
	list-style:none;
}
.tree li{
	display:flex;
	align-items:center;
	height:9px;
	gap:1px;
	padding-left:5px;
	white-space:nowrap;
}
.tree .root{
	height:10px;
	padding-left:0;
	gap:0;
	border:1px solid #a4a5ae;
}
.open{
	border-left:4px solid transparent;
	border-bottom:4px solid #444444;
}
.closed{
	border-top:2px solid transparent;
	border-bottom:2px solid transparent;
	border-left:3px solid #b5b5bd;
}

/* plan view */
.doc{
	flex:1;
	min-width:0;
	display:flex;
	flex-direction:column;
}
.doctabs{
	display:flex;
	height:12px;
	padding-top:1px;
}
.doctab{
	display:flex;
	align-items:center;
	gap:2px;
	padding:0 3px;
	background-color:#f5f5f9;
}
.map{
	flex:1;
	min-height:0;
	width:100%;
	background-color:#000000;
	font-family:"Liberation Sans",sans-serif;
	font-size:7px;
}
.gridline{
	stroke:#5a5a5a;
	stroke-dasharray:9 2 2 2 2 2;
}
.axis{
	fill:#808080;
}
.ray{
	stroke:#0000ff;
	fill:none;
}
.marker{
	fill:none;
	stroke:#d8d8d8;
}
.name{
	fill:#e8e8e8;
}

/* status bar */
.status{
	display:flex;
	align-items:center;
	justify-content:flex-end;
	height:14px;
	background-color:#f1f1f1;
}
.status button{
	width:11px;
	height:12px;
}
.status .word{
	width:auto;
	padding:0 2px;
}
.count{
	width:16px;
	padding-left:4px;
	text-align:center;
}
.coords{
	width:116px;
	padding-left:4px;
}

/* taskbar */
.taskbar{
	display:flex;
	height:16px;
	background-color:#2e2e2e;
	color:#eeeeee;
}
.taskbar button{
	width:20px;
	border-bottom:1px solid transparent;
}
.taskbar .run{
	border-bottom-color:#76b9ed;
}
.taskbar .current{
	background-color:#666a6d;
}
.taskbar .current svg{
	width:10px;
	height:10px;
}
.tray{
	display:flex;
	align-items:center;
	gap:4px;
	margin-left:auto;
	padding-right:13px;
	font-size:7px;
}
.sun{
	width:10px;
	height:10px;
	margin-right:1px;
	border-radius:50%;
	background-color:#f39322;
}
.lang,.clock{
	padding:0 1px;
}
```
FILE: map.js
```
var NS = "http://www.w3.org/2000/svg";
var map = document.getElementById("map");

// corners of the traverse, in drawing units, and points on each leg
var route = [
	[235,406,0],[244,406,2],[254,412,3],[268,415,4],[290,414,5],[310,409,5],[330,409,5],[350,412,5],[372,416,6],
	[385,405,3],[394,402,4],[412,397,5],[435,394,6],[460,391,6],[485,390,6],[504,387,5],
	[516,381,3],[540,376,6],[562,372,6],[586,366,6],
	[585,355,4],[600,349,5],[625,345,6],[650,340,6],[674,334,6],
	[686,330,5],[700,324,5],[708,316,4],
	[718,306,3],[735,300,6],[750,292,6],[760,287,4],
	[764,278,2],[778,274,4],[800,273,6],[828,273,6],
	[848,264,5],[866,259,5],[885,257,5],[900,258,4],
	[904,265,2],[920,261,3],[937,255,4],[945,248,3],[960,247,5],[971,248,5]
];
var drift = [0,-2,3,1,-3,2,-1,4,-2,0,3];
var points = [];

function add(tag, attrs, text){
	var el = document.createElementNS(NS, tag);
	for(var key in attrs){
		el.setAttribute(key, attrs[key]);
	}
	if(text){
		el.textContent = text;
	}
	map.appendChild(el);
}

function ray(a, b, opacity){
	add("path", {class:"ray", d:`M${a[0]} ${a[1]}L${b[0]} ${b[1]}`, "stroke-opacity":opacity});
}

function grid(){
	for(var i=0;i<9;i++){
		var x = 159.5 + i*107;
		add("path", {class:"gridline", d:`M${x} 90V546`});
		add("text", {class:"axis", transform:`translate(${x-2} 544) rotate(-90)`}, String(260000 + i*10000));
	}
	for(var j=0;j<4;j++){
		var y = 180.5 + j*107;
		add("path", {class:"gridline", d:`M147 ${y}H1024`});
		add("text", {class:"axis", x:149, y:y-1}, String(8690000 - j*10000));
	}
}

function survey(){
	for(var i=0;i<route.length;i++){
		var n = route[i][2] || 1;
		var from = route[Math.max(i-1,0)];
		for(var k=1;k<=n;k++){
			points.push([
				Math.round(from[0] + (route[i][0]-from[0])*k/n),
				Math.round(from[1] + (route[i][1]-from[1])*k/n + drift[points.length%drift.length])
			]);
		}
	}
}

function rays(){
	var base = [379,487];
	var second = [674,333];
	points.forEach(function(p){
		if(p[0] < 530){
			ray(base, p, 0.4);
			ray(base, [p[0]+2,p[1]+1], 0.3);
		}
		if(p[0] > 700 && p[0] < 945){
			ray(second, p, 0.6);
		}
	});
	// the dense edges of both fans
	for(var i=0;i<12;i++){
		ray(base, [250+i*5,412+(i>3?4:i)], 0.4);
		ray(base, [490+i*4,391-Math.max(i-5,0)], 0.4);
		ray(base, [369+i*2,415], 0.3);
		ray(second, [903,260+i/2], 0.6);
		ray(second, [770+i*11,279-i], 0.4);
	}
	ray(second, [1024,190], 0.5);
}

function labels(){
	points.forEach(function(p, i){
		add("circle", {class:"marker", cx:p[0], cy:p[1], r:1.5, "stroke-width":0.7});
		add("text", {class:"name", x:p[0]+6, y:p[1]+3}, "BM-" + String(i+2).padStart(2,"0"));
	});
	[[251,418],[251,422],[762,280],[909,267]].forEach(function(p){
		add("circle", {class:"marker", cx:p[0], cy:p[1], r:1.5, "stroke-width":0.7});
	});
	add("text", {class:"name", x:257, y:425}, "BM-01");
	add("text", {class:"name", x:768, y:282}, "BM-128");
	add("text", {class:"name", x:712, y:319}, "BM-116");
	add("text", {class:"name", x:915, y:270}, "BM-156");
	add("path", {class:"marker", d:"M375 490L379 483L383 490Z"});
	add("path", {class:"marker", d:"M671 335L674 330L677 335Z"});
	add("text", {class:"name", x:386, y:491}, "LI01");
}

function scale(){
	add("text", {class:"name", x:188, y:502}, "5000 m");
	add("path", {class:"marker", d:"M188.5 504V509.5H242.5V504"});
}

grid();
survey();
rays();
labels();
scale();
```
